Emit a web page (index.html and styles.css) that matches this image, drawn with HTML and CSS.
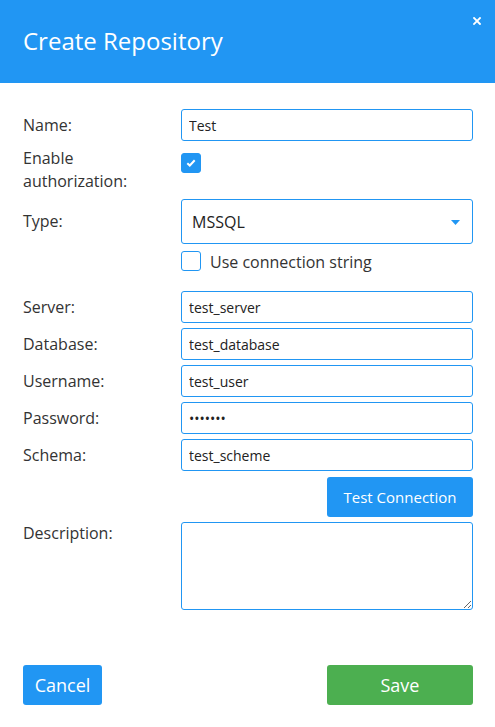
FILE: index.html
```html
<!DOCTYPE html>
<html lang="en">
<head>
<meta charset="utf-8">
<title>Create Repository</title>
<link rel="stylesheet" href="styles.css">
</head>
<body>
<div class="dialog">
  <header class="header">
    <h1 class="title">Create Repository</h1>
    <button class="close" aria-label="Close">
      <svg width="8" height="8" viewBox="0 0 8 8"><path d="M1 1L7 7M7 1L1 7" stroke="#fff" stroke-width="1.8" stroke-linecap="square"/></svg>
    </button>
  </header>
  <form class="form">
    <div class="row">
      <label class="label">Name:</label>
      <input class="input" type="text" value="Test">
    </div>
    <div class="row row-top gap6">
      <label class="label two">Enable<br>authorization:</label>
      <div class="checkcell">
        <span class="check checked">
          <svg width="10" height="8" viewBox="0 0 10 8"><path d="M1.3 4.2L3.8 6.5L8.7 1.3" fill="none" stroke="#fff" stroke-width="2"/></svg>
        </span>
      </div>
    </div>
    <div class="row gap6">
      <label class="label">Type:</label>
      <div class="select">
        <span>MSSQL</span>
        <svg width="9" height="5" viewBox="0 0 9 5"><path d="M0 0H9L4.5 5Z" fill="#2196F3"/></svg>
      </div>
    </div>
    <div class="row gap7">
      <span></span>
      <label class="option"><span class="check"></span><span class="option-text">Use connection string</span></label>
    </div>
    <div class="row gap20">
      <label class="label">Server:</label>
      <input class="input" type="text" value="test_server">
    </div>
    <div class="row gap5">
      <label class="label">Database:</label>
      <input class="input" type="text" value="test_database">
    </div>
    <div class="row gap5">
      <label class="label">Username:</label>
      <input class="input" type="text" value="test_user">
    </div>
    <div class="row gap5">
      <label class="label">Password:</label>
      <input class="input" type="password" value="1234567">
    </div>
    <div class="row gap5">
      <label class="label">Schema:</label>
      <input class="input" type="text" value="test_scheme">
    </div>
    <div class="row gap6">
      <span></span>
      <div class="right"><button type="button" class="btn btn-blue btn-test">Test Connection</button></div>
    </div>
    <div class="row row-top gap5">
      <label class="label desc">Description:</label>
      <textarea class="textarea"></textarea>
    </div>
  </form>
  <footer class="footer">
    <button type="button" class="btn btn-blue btn-cancel">Cancel</button>
    <button type="button" class="btn btn-green btn-save">Save</button>
  </footer>
</div>
</body>
</html>
```
FILE: styles.css
```css
* { box-sizing: border-box; }
html, body { margin: 0; padding: 0; background: #fff; }
body { font-family: "Open Sans", "Liberation Sans", sans-serif; color: #333; }

.dialog { width: 495px; height: 727px; display: flex; flex-direction: column; }

.header {
  background: #2196F3;
  height: 83px;
  display: flex;
  align-items: center;
  padding: 0 23px;
  position: relative;
}
.title { margin: 0; font-size: 24px; font-weight: 400; color: #fff; line-height: 1; padding-bottom: 2px; }
.close {
  position: absolute; top: 17px; right: 14px;
  width: 8px; height: 8px; padding: 0; border: 0; background: none;
  display: flex;
}

.form { padding: 26px 22px 0 23px; display: flex; flex-direction: column; }
.row { display: grid; grid-template-columns: 158px 292px; align-items: center; }
.row-top { align-items: start; }
.gap5 { margin-top: 5px; }
.gap6 { margin-top: 6px; }
.gap7 { margin-top: 7px; }
.gap20 { margin-top: 20px; }

.label { font-size: 16px; line-height: 23px; color: #333; }
.label.desc { padding-top: 0; }

.input {
  height: 32px; width: 292px;
  border: 1px solid #2196F3; border-radius: 3px;
  padding: 0 7px;
  font-family: "Open Sans", "Liberation Sans", sans-serif;
  font-size: 14px; color: #222; outline: none; background: #fff;
}

.checkcell { padding-top: 6px; display: flex; }
.check {
  width: 20px; height: 20px; border: 1px solid #2196F3; border-radius: 3px;
  display: inline-flex; align-items: center; justify-content: center; background: #fff;
  flex: none;
}
.check.checked { background: #2196F3; }

.select {
  height: 45px; border: 1px solid #2196F3; border-radius: 3px;
  display: flex; align-items: center; justify-content: space-between;
  padding: 0 12px 0 10px;
  font-size: 16px; color: #222;
}
.select svg { margin-top: 1px; }

.option { display: flex; align-items: center; gap: 9px; font-size: 16px; color: #333; height: 20px; }
.option-text { line-height: 20px; margin-top: 2px; }

.right { display: flex; justify-content: flex-end; }

.btn {
  border: 0; border-radius: 3px; color: #fff;
  font-family: "Open Sans", "Liberation Sans", sans-serif;
  height: 40px; padding: 0; cursor: pointer;
}
.btn-blue { background: #2196F3; }
.btn-green { background: #4CAF50; }
.btn-test { width: 146px; font-size: 15px; }

.textarea {
  width: 292px; height: 88px;
  border: 1px solid #2196F3; border-radius: 3px; outline: none;
  font-family: "Open Sans", "Liberation Sans", sans-serif; font-size: 14px;
  padding: 6px 7px; display: block;
}

.footer { margin-top: auto; padding: 0 22px 22px 23px; display: flex; justify-content: space-between; }
.btn-cancel { width: 79px; font-size: 18px; }
.btn-save { width: 146px; font-size: 18px; }
```
